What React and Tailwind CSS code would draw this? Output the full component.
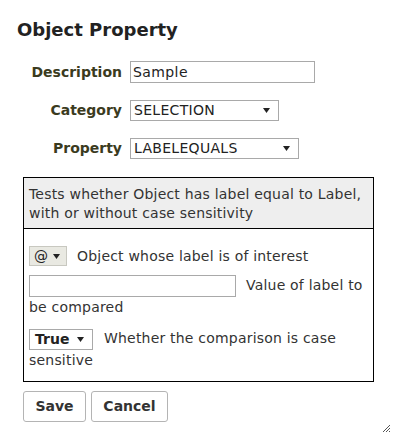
import React, { useState } from "react";

// Dialog: Object Property editor
const fields = [
  { label: "Description", type: "input", value: "Sample", width: "w-[185px]" },
  { label: "Category", type: "select", value: "SELECTION", width: "w-[149px]" },
  { label: "Property", type: "select", value: "LABELEQUALS", width: "w-[169px]" },
];

const Caret = () => (
  <svg width="7" height="7" viewBox="0 0 7 7" className="shrink-0">
    <path d="M0 1 L7 1 L3.5 6 Z" fill="#222" />
  </svg>
);

const App = () => {
  const [desc, setDesc] = useState("Sample");

  return (
    <div className="relative w-[397px] h-[438px] bg-white font-['DejaVu_Sans',sans-serif] text-[#333]">
      <h1 className="pl-[17px] pt-[18px] text-[18px] font-bold leading-[24px] text-[#222]">
        Object Property
      </h1>

      {/* Kolom label dan input */}
      <div className="mt-[19px] flex flex-col gap-[16px]">
        {fields.map((f) => (
          <div key={f.label} className="flex items-center h-[22px]">
            <span className="w-[122px] text-right text-[14px] font-bold text-[#3b3b1e]">
              {f.label}
            </span>
            {f.type === "input" ? (
              <input
                value={desc}
                onChange={(e) => setDesc(e.target.value)}
                className={`ml-[8px] ${f.width} h-[22px] border border-[#a9a9a9] px-[2px] text-[14px] tracking-[0.4px] text-[#222] outline-none`}
              />
            ) : (
              <div
                className={`ml-[8px] ${f.width} h-[21px] border border-[#a9a9a9] flex items-center justify-between pl-[3px] pr-[8px] text-[14px] tracking-[0.3px] text-[#222]`}
              >
                <span>{f.value}</span>
                <Caret />
              </div>
            )}
          </div>
        ))}
      </div>

      {/* Kotak deskripsi parameter */}
      <div className="mx-[23px] mt-[18px] w-[351px] border border-black text-[14px] tracking-[0.2px] leading-[19px]">
        <div className="bg-[#eeeeee] border-b border-black px-[5px] pt-[7px] pb-[5px]">
          Tests whether Object has label equal to Label, with or without case sensitivity
        </div>
        <div className="px-[5px] pt-[17px] pb-[10px]">
          <div className="flex items-center">
            <div className="w-[38px] h-[20px] bg-[#e9e9e2] border border-[#c8c8c0] flex items-center justify-between pl-[4px] pr-[6px]">
              <span className="text-[#222]">@</span>
              <Caret />
            </div>
            <span className="ml-[10px]">Object whose label is of interest</span>
          </div>
          <div className="mt-[9px] leading-[21px]">
            <input className="w-[207px] h-[22px] border border-[#a9a9a9] align-middle outline-none" />
            <span className="ml-[10px]">Value of label to be compared</span>
          </div>
          <div className="mt-[10px] leading-[21px]">
            <span className="inline-flex align-middle w-[64px] h-[21px] border border-[#a9a9a9] items-center justify-between pl-[5px] pr-[8px]">
              <span className="font-bold text-[#222] tracking-normal">True</span>
              <Caret />
            </span>
            <span className="ml-[11px]">Whether the comparison is case sensitive</span>
          </div>
        </div>
      </div>

      {/* Tombol */}
      <div className="flex gap-[5px] ml-[23px] mt-[9px]">
        <button className="w-[63px] h-[31px] border border-[#b4b4b4] rounded-[3px] bg-white text-[14px] font-bold text-[#333]">
          Save
        </button>
        <button className="w-[77px] h-[31px] border border-[#b4b4b4] rounded-[3px] bg-white text-[14px] font-bold text-[#333]">
          Cancel
        </button>
      </div>

      {/* Pegangan resize */}
      <svg className="absolute right-[6px] bottom-[5px]" width="9" height="9" viewBox="0 0 9 9">
        <path d="M1 8 L8 1 M4 8 L8 4 M7 8 L8 7" stroke="#555" strokeWidth="1" />
      </svg>
    </div>
  );
};

export default App;
